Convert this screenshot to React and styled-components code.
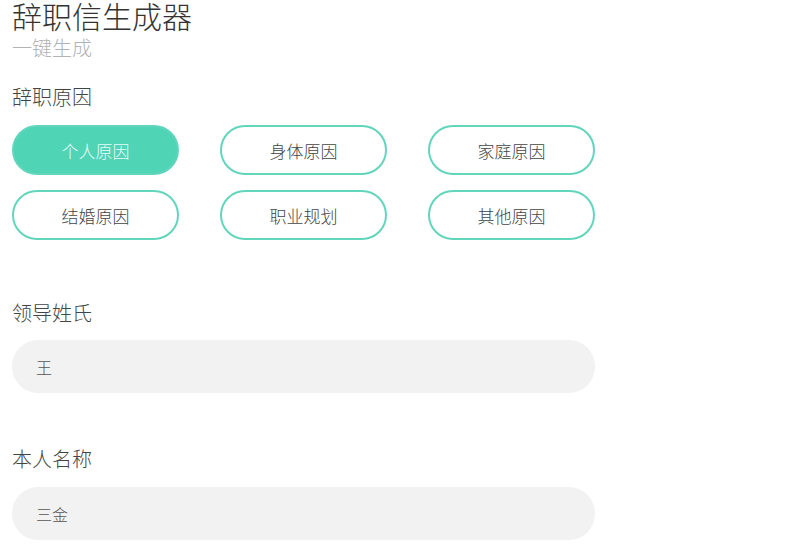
import { useState } from 'react'
import styled, { createGlobalStyle } from 'styled-components'

const GlobalStyle = createGlobalStyle`
  html, body {
    margin: 0;
    padding: 0;
    background: #ffffff;
  }
  body {
    font-family: "Noto Sans CJK SC", "Noto Sans", sans-serif;
    font-weight: 300;
    color: #333;
  }
`

const Page = styled.main`
  width: 800px;
  height: 544px;
  overflow: hidden;
  padding-left: 12px;
  box-sizing: border-box;
`
const Title = styled.h1`
  margin: 0;
  font-size: 30px;
  line-height: 30px;
  font-weight: 300;
  color: #333;
`
const Subtitle = styled.div`
  margin-top: 5px;
  font-size: 20px;
  line-height: 26px;
  color: #b3b3b3;
`
const Label = styled.div`
  margin-top: ${({ $gap }) => $gap}px;
  font-size: 20px;
  line-height: 28px;
  color: #444;
`
const OptionGrid = styled.div`
  display: grid;
  grid-template-columns: repeat(3, 167px);
  column-gap: 41px;
  row-gap: 15px;
  margin-top: 14px;
`
const Option = styled.button`
  height: 50px;
  box-sizing: border-box;
  border: 2px solid #62d6bd;
  border-radius: 25px;
  background: ${({ $active }) => ($active ? '#4fd4b6' : '#fff')};
  color: ${({ $active }) => ($active ? '#e9fbf6' : '#444')};
  font-family: inherit;
  font-weight: 300;
  font-size: 17px;
  padding: 0;
  cursor: pointer;
`
const Field = styled.input`
  display: block;
  margin-top: ${({ $gap }) => $gap}px;
  width: 583px;
  height: 53px;
  box-sizing: border-box;
  border: none;
  outline: none;
  border-radius: 26px;
  background: #f2f2f2;
  padding: 0 24px;
  font-family: inherit;
  font-weight: 300;
  font-size: 16px;
  color: #555;
`

const reasons = ['个人原因', '身体原因', '家庭原因', '结婚原因', '职业规划', '其他原因']

export default function App() {
  const [reason, setReason] = useState('个人原因')
  const [leader, setLeader] = useState('王')
  const [name, setName] = useState('三金')

  return (
    <>
      <GlobalStyle />
      <Page>
        <Title>辞职信生成器</Title>
        <Subtitle>一键生成</Subtitle>
        <Label $gap={22}>辞职原因</Label>
        <OptionGrid>
          {reasons.map((item) => (
            <Option
              key={item}
              $active={item === reason}
              onClick={() => setReason(item)}
            >
              {item}
            </Option>
          ))}
        </OptionGrid>
        <Label $gap={59}>领导姓氏</Label>
        <Field $gap={13} value={leader} onChange={(e) => setLeader(e.target.value)} />
        <Label $gap={52}>本人名称</Label>
        <Field $gap={14} value={name} onChange={(e) => setName(e.target.value)} />
      </Page>
    </>
  )
}
